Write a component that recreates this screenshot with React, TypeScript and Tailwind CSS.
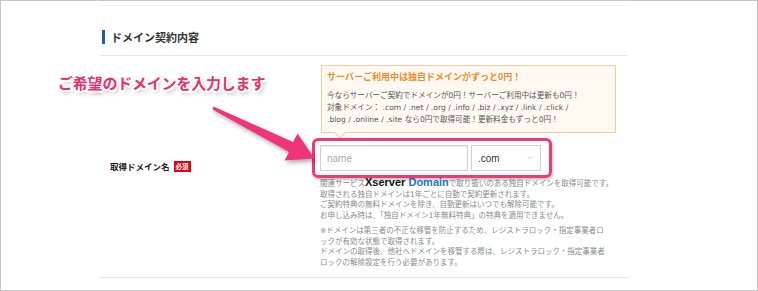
import { ChevronDown } from 'lucide-react';

export default function App() {
  return (
    <div className="relative w-[758px] h-[291px] border border-[#c6c6c6] bg-white overflow-hidden font-['Noto_Sans_CJK_JP',sans-serif] text-[#333]">
      <div className="ml-[99px] w-[527px] pt-[4px]">
        <div className="border-t border-[#efefef]" />

        {/* Section heading */}
        <div className="h-[50px] pt-[24px] border-b border-[#e6e6e6]">
          <div className="flex items-center gap-[6px] pl-[2px]">
            <div className="w-[3px] h-[14px] bg-[#1d5ea8]" />
            <h2 className="text-[11px] leading-[14px] font-bold">ドメイン契約内容</h2>
          </div>
        </div>

        {/* Form row */}
        <div className="flex">
          <div className="w-[220px] pl-[10px] pt-[104px]">
            <div className="flex items-center gap-[4px]">
              <span className="text-[8.5px] leading-[12px] font-bold text-[#222]">取得ドメイン名</span>
              <span className="bg-[#d8070f] text-white text-[6.5px] leading-[11px] font-bold px-[2px]">必須</span>
            </div>
          </div>

          <div className="flex-1 pt-[9px]">
            <div className="relative ml-[1px] w-[295px] h-[68px] border border-[#f6cc9f] bg-[#fff9f1] px-[5px] pt-[5px]">
              <p className="text-[9px] leading-[12px] font-bold text-[#ef8a2a]">
                サーバーご利用中は独自ドメインがずっと0円！
              </p>
              <div className="mt-[7px] text-[7.6px] leading-[12px] text-[#555] whitespace-nowrap font-['DejaVu_Sans','Noto_Sans_CJK_JP',sans-serif]">
                <p>今ならサーバーご契約でドメインが0円！サーバーご利用中は更新も0円！</p>
                <p>対象ドメイン： .com / .net / .org / .info / .biz / .xyz / .link / .click /</p>
                <p>.blog / .online / .site なら0円で取得可能！更新料金もずっと0円！</p>
              </div>
              <div className="absolute left-[14px] bottom-[-5px] w-[8px] h-[8px] rotate-45 bg-[#fff9f1] border-r border-b border-[#f6cc9f]" />
            </div>

            <div className="flex gap-[3px] mt-[12px]">
              <div className="w-[148px] h-[26px] border border-[#cfcfcf] bg-white flex items-center px-[6px] shadow-[inset_0_1px_2px_rgba(0,0,0,0.08)]">
                <span className="text-[10px] text-[#aaa] font-['Liberation_Sans',sans-serif]">name</span>
              </div>
              <div className="w-[70px] h-[26px] border border-[#cfcfcf] bg-white flex items-center justify-between pl-[6px] pr-[6px]">
                <span className="text-[10px] text-[#333] font-['Liberation_Sans',sans-serif]">.com</span>
                <ChevronDown className="w-[8px] h-[8px] text-[#aaa]" strokeWidth={1.5} />
              </div>
            </div>

            <div className="mt-[6px] text-[7.5px] leading-[10.5px] text-[#8a8a8a] whitespace-nowrap font-['DejaVu_Sans','Noto_Sans_CJK_JP',sans-serif]">
              <p>
                関連サービス
                <span className="text-[11px] leading-none font-bold text-[#111] font-['Liberation_Sans',sans-serif]">Xserver </span>
                <span className="text-[11px] leading-none font-bold text-[#2876c4] font-['Liberation_Sans',sans-serif]">Domain</span>
                で取り扱いのある独自ドメインを取得可能です。
              </p>
              <p>取得される独自ドメインは1年ごとに自動で契約更新されます。</p>
              <p>ご契約特典の無料ドメインを除き、自動更新はいつでも解除可能です。</p>
              <p>お申し込み時は、「独自ドメイン1年無料特典」の特典を適用できません。</p>
              <div className="mt-[5px]">
                <p>※ドメインは第三者の不正な移管を防止するため、レジストラロック・指定事業者ロ</p>
                <p>ックが有効な状態で取得されます。</p>
                <p>ドメインの取得後、他社へドメインを移管する際は、レジストラロック・指定事業者</p>
                <p>ロックの解除設定を行う必要があります。</p>
              </div>
            </div>
          </div>
        </div>

        <div className="mt-[9px] border-t border-[#e6e6e6]" />
      </div>

      {/* Annotation: highlight frame */}
      <div className="absolute left-[311px] top-[137px] w-[240px] h-[40px] rounded-[6px] border-[3px] border-[#ee3a78] shadow-[1px_2px_3px_rgba(0,0,0,0.25)]" />

      {/* Annotation: arrow */}
      <svg className="absolute left-0 top-0 w-[758px] h-[291px] pointer-events-none drop-shadow-[2px_3px_2px_rgba(0,0,0,0.3)]" viewBox="0 0 758 291">
        <polygon
          fill="#ee3677"
          points="212.5,105.4 292,141 296.6,132.5 313.5,157.5 283.5,159.5 288,151 211.5,108.6"
        />
      </svg>

      {/* Annotation: caption */}
      <div className="absolute left-[57px] top-[71px] text-[15px] leading-[22px] font-bold text-[#e8306f] tracking-[-0.2px] [text-shadow:-2px_0_0_#fff,2px_0_0_#fff,0_-2px_0_#fff,0_2px_0_#fff,-1.5px_-1.5px_0_#fff,1.5px_1.5px_0_#fff,-1.5px_1.5px_0_#fff,1.5px_-1.5px_0_#fff,2px_3px_4px_rgba(0,0,0,0.35)]">
        ご希望のドメインを入力します
      </div>
    </div>
  );
}
